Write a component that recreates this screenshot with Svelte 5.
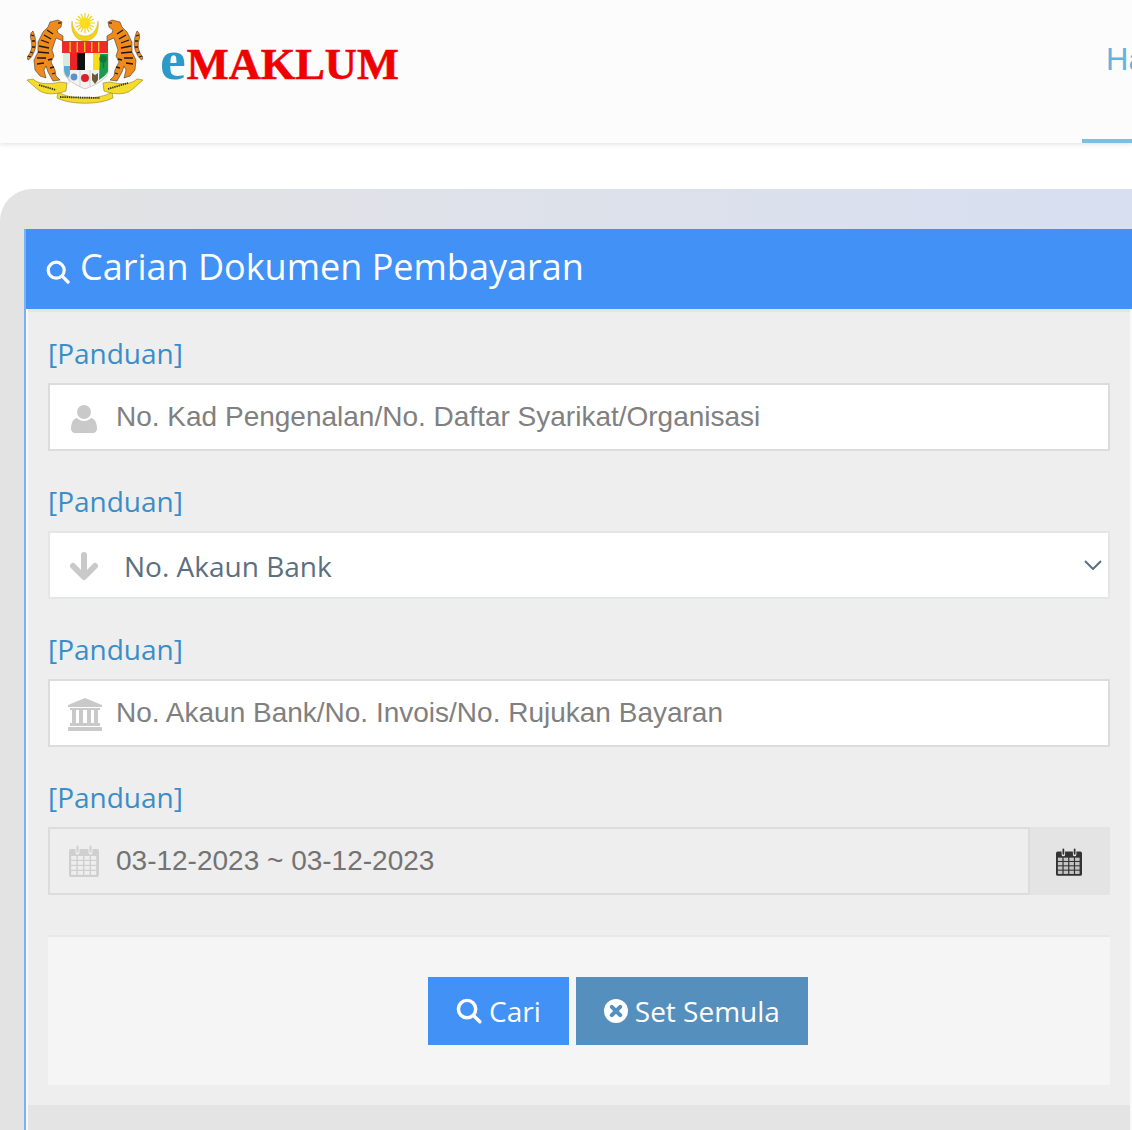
<script>
  // form rows, in page order
  const kad = 'No. Kad Pengenalan/No. Daftar Syarikat/Organisasi';
  const rujukan = 'No. Akaun Bank/No. Invois/No. Rujukan Bayaran';
  const tarikh = '03-12-2023 ~ 03-12-2023';
</script>

{#snippet searchIcon(size)}
  <svg class="icon" width={size} height={size} viewBox="0 0 24 24" fill="none" stroke="#fff" stroke-width="3.2" stroke-linecap="round">
    <circle cx="10.2" cy="10.2" r="8" />
    <path d="M16.2 16.2 22 22" />
  </svg>
{/snippet}

{#snippet calendarIcon(w, h, color, cell)}
  <svg class="icon" width={w} height={h} viewBox="0 0 30 32">
    <path fill={color} d="M2 4h4.5v3.5a2 2 0 0 0 4 0V4h9v3.5a2 2 0 0 0 4 0V4H28a2 2 0 0 1 2 2v24a2 2 0 0 1-2 2H2a2 2 0 0 1-2-2V6a2 2 0 0 1 2-2z" />
    <rect x="7.5" y="0.5" width="2" height="7" rx="1" fill={color} />
    <rect x="20.5" y="0.5" width="2" height="7" rx="1" fill={color} />
    <g fill={cell}>
      {#each [0, 1, 2, 3] as r}
        {#each [0, 1, 2, 3] as c}
          <rect x={2.2 + c * 6.6} y={11 + r * 5} width="5.2" height="3.8" />
        {/each}
      {/each}
    </g>
  </svg>
{/snippet}

<div class="page">
  <header class="topbar">
    <div class="brand">
      <svg class="crest" width="116" height="94" viewBox="27 10 116 94">
        <defs>
          <g id="tiger">
            <path d="M33 31C36 38 37 46 34 52 32 57 30 59 28 60L27 57C31 53 33 47 31 40 30 36 30 33 33 31z" fill="#ef8a1c" stroke="#222" stroke-width=".5" />
            <path d="M50 22 58 20 62 22 61 27 57 30 58 33 63 36 63 41 56 38 54 44 52 50 54 56 51 62 55 70 56 76 60 80 53 81 48 72 46 66 44 70 46 78 40 76 35 70 34 60 38 52 38 42 43 32 48 27z" fill="#ef8a1c" stroke="#222" stroke-width=".5" />
            <path d="M47 30l6 4M44 35l7 4M41 40l8 3M39 46l10 2M38 52l11 1M37 58l9 0M37 64l7-1M48 60l4-1M50 68l4-1M52 74l3-1M31 35l3 1M32 41l3 0M32 47l3 0M30 52l3 1M28 56l3 1" stroke="#1a1a1a" stroke-width="1.3" fill="none" />
            <path d="M58 23l3 0" stroke="#1a1a1a" stroke-width="1.2" />
          </g>
        </defs>
        <!-- sun and crescent -->
        <g stroke="#f6d21c" stroke-width="1.2">
          <path d="M85 13v20M75 23h20M78 16l14 14M92 16 78 30M81 14l8 18M89 14l-8 18M76 19l18 8M94 19l-18 8" />
        </g>
        <circle cx="85" cy="23" r="5.5" fill="#fbdc1e" />
        <path d="M72 21c-2 11 4 20 13 20s15-9 13-20c-1 9-6 15-13 15s-12-6-13-15z" fill="#f4d316" stroke="#b08a10" stroke-width=".3" />
        <!-- shield -->
        <path d="M64 53h44v18c0 7-10 13-23 18-12-5-21-11-21-18z" fill="#f2f2f2" stroke="#8a8a8a" stroke-width=".4" />
        <rect x="62" y="41" width="46" height="12" fill="#ee2a2a" />
        <g fill="#e9c51a">
          <rect x="69.4" y="42" width="1.4" height="10" /><rect x="76.6" y="42" width="1.4" height="10" />
          <rect x="84" y="42" width="1.4" height="10" /><rect x="91" y="42" width="1.4" height="10" /><rect x="98" y="42" width="1.4" height="10" />
        </g>
        <rect x="70" y="53" width="7" height="17" fill="#ea2323" />
        <rect x="77" y="53" width="8" height="17" fill="#111" />
        <rect x="85" y="53" width="8" height="17" fill="#fff" />
        <rect x="93" y="53" width="7" height="17" fill="#f7dc1c" />
        <path d="M100 54h8v16c0 3-4 7-9 10z" fill="#1c9b4c" />
        <path d="M103.5 55c3 0 4 3 3 5 0 2-2 3-3 3s-4-1-4-3c-1-2 1-5 4-5zM102.8 62h1.4v6h-1.4z" fill="#0e7a36" />
        <path d="M64 54h6v9l-1 10c-3-2-5-4-5-7z" fill="#d9eadf" />
        <path d="M64 66h6v8l-2 4c-3-3-4-6-4-9z" fill="#5aa8d8" />
        <circle cx="74" cy="77" r="3.4" fill="#5b93c9" />
        <circle cx="85" cy="78" r="4" fill="#d9232a" />
        <path d="M92 73l3 2 3-2v7l-3 4-3-4z" fill="#6a5a3a" />
        <path d="M69 70v14M80 70v17M90 70v17" stroke="#aaa" stroke-width=".4" fill="none" />
        <!-- tigers -->
        <use href="#tiger" />
        <use href="#tiger" transform="translate(170 0) scale(-1 1)" />
        <!-- ribbon -->
        <g fill="#f5dc2a" stroke="#7b6a10" stroke-width=".5">
          <path d="M58 92C70 100 100 100 112 92L113 98C100 105 70 105 57 98z" />
          <path d="M27 80 33 79C38 84 48 85 60 82L67 83 66 91C52 96 42 94 36 88 33 85 30 83 27 80z" />
          <path d="M143 80 137 79C132 84 122 85 110 82L103 83 104 91C118 96 128 94 134 88 137 85 140 83 143 80z" />
        </g>
        <path d="M39 85l17 5M60 97l40 1M108 89l20-6" stroke="#333" stroke-width="1.8" stroke-dasharray="1.4 .8" fill="none" />
      </svg>
      <div class="wordmark"><span class="e">e</span><span class="maklum">MAKLUM</span></div>
    </div>
    <nav class="tabs">
      <span class="tab">Halaman</span>
    </nav>
  </header>

  <main class="panel">
    <section class="card">
      <h1>
        <span class="h-ico">{@render searchIcon(24)}</span>
        Carian Dokumen Pembayaran
      </h1>
      <div class="card-body">
        <div class="group">
          <span class="panduan">[Panduan]</span>
          <div class="field">
            <svg class="icon lead user" width="26" height="28" viewBox="0 0 26 28" fill="#c9c9c9">
              <circle cx="13" cy="7" r="7" />
              <path d="M6 13c2 2 4 3 7 3s5-1 7-3c4 1 6 5 6 11 0 2-2 4-4 4H4c-2 0-4-2-4-4 0-6 2-10 6-11z" />
            </svg>
            <span class="ph">{kad}</span>
          </div>
        </div>

        <div class="group">
          <span class="panduan">[Panduan]</span>
          <div class="field select">
            <svg class="icon lead arrow" width="30" height="28" viewBox="0 0 30 28" fill="none" stroke="#c9c9c9" stroke-width="6" stroke-linecap="round" stroke-linejoin="round">
              <path d="M15 3v21M4 14l11 11 11-11" />
            </svg>
            <span class="sel-text">No. Akaun Bank</span>
            <svg class="chevron" width="18" height="10" viewBox="0 0 18 10" fill="none" stroke="#5c6f80" stroke-width="2">
              <path d="M1 1l8 8 8-8" />
            </svg>
          </div>
        </div>

        <div class="group">
          <span class="panduan">[Panduan]</span>
          <div class="field">
            <svg class="icon lead bank" width="36" height="33" viewBox="0 0 36 33" fill="#c9c9c9">
              <path d="M18 0 35 7v2H1V7z" />
              <rect x="3" y="10" width="30" height="2" />
              <rect x="5" y="12" width="4" height="13" /><rect x="12" y="12" width="4" height="13" />
              <rect x="20" y="12" width="4" height="13" /><rect x="27" y="12" width="4" height="13" />
              <rect x="3" y="25" width="30" height="3" />
              <rect x="1" y="29" width="34" height="4" rx="1" />
            </svg>
            <span class="ph">{rujukan}</span>
          </div>
        </div>

        <div class="group">
          <span class="panduan">[Panduan]</span>
          <div class="date-row">
            <div class="field readonly">
              <span class="lead cal">{@render calendarIcon(30, 32, '#cfcfcf', '#eeeeee')}</span>
              <span class="ph date">{tarikh}</span>
            </div>
            <div class="addon">{@render calendarIcon(26, 28, '#333333', '#c4c4c4')}</div>
          </div>
        </div>

        <div class="actions">
          <button class="btn cari">{@render searchIcon(26)} Cari</button>
          <button class="btn reset">
            <svg class="icon" width="24" height="24" viewBox="0 0 24 24">
              <circle cx="12" cy="12" r="12" fill="#fff" />
              <path d="M7.8 7.8l8.4 8.4M16.2 7.8l-8.4 8.4" stroke="#548fbd" stroke-width="4" stroke-linecap="round" />
            </svg>
            Set Semula
          </button>
        </div>
      </div>
      <div class="card-foot"></div>
    </section>
  </main>
</div>

<style>
  :global(body) {
    margin: 0;
    background: #fff;
  }
  .page {
    width: 1132px;
    height: 1130px;
    overflow: hidden;
    display: flex;
    flex-direction: column;
    background: #fff;
  }
  .topbar {
    height: 143px;
    flex: none;
    display: flex;
    justify-content: space-between;
    background: #fcfcfc;
    box-shadow: 0 1px 5px rgba(0, 0, 0, 0.14);
    overflow: hidden;
  }
  .brand {
    display: flex;
    align-items: flex-start;
    padding: 10px 0 0 27px;
  }
  .crest {
    filter: blur(0.35px);
    display: block;
  }
  .wordmark {
    display: flex;
    align-items: baseline;
    margin: 20px 0 0 17px;
    height: 60px;
    font-family: 'Liberation Serif', serif;
    font-weight: 700;
    line-height: 60px;
  }
  .e {
    font-size: 58px;
    color: #2b9ac9;
  }
  .maklum {
    font-size: 44.4px;
    color: #f00000;
    margin-left: 1px;
    -webkit-text-stroke: 0.6px #f00000;
  }
  .tabs {
    width: 50px;
    flex: none;
    overflow: hidden;
  }
  .tab {
    display: block;
    box-sizing: border-box;
    width: 200px;
    height: 143px;
    padding: 40px 0 0 24px;
    font-family: 'Liberation Sans', sans-serif;
    font-size: 31px;
    line-height: 40px;
    color: #62b4e0;
    border-bottom: 4px solid #7ebfe0;
  }
  .panel {
    flex: 1;
    margin-top: 46px;
    padding: 40px 0 0 24px;
    display: flex;
    border-top-left-radius: 32px;
    background: linear-gradient(90deg, #e3e3e3, #d7dff1);
  }
  .card {
    flex: 1;
    display: flex;
    flex-direction: column;
    border-left: 2px solid #7ab0f5;
    background: #f8f8f8;
  }
  h1 {
    box-sizing: border-box;
    margin: 0;
    height: 80px;
    flex: none;
    display: flex;
    align-items: center;
    gap: 10px;
    padding: 0 0 6px 20px;
    background: #4291f6;
    color: #fff;
    font-family: 'Open Sans', sans-serif;
    font-size: 36px;
    font-weight: 400;
  }
  .h-ico {
    display: flex;
    margin-top: 12px;
  }
  .icon {
    display: block;
    flex: none;
  }
  .card-body {
    margin: 0 2px;
    padding: 21px 20px 20px;
    border-top: 3px solid #e5e5e5;
    background: #eeeeee;
    display: flex;
    flex-direction: column;
    gap: 30px;
  }
  .card-foot {
    flex: 1;
    margin: 0 2px;
    background: #e4e4e4;
  }
  .group {
    display: flex;
    flex-direction: column;
    gap: 10px;
  }
  .panduan {
    font-family: 'Open Sans', sans-serif;
    font-size: 28px;
    line-height: 40px;
    color: #3a8dc9;
  }
  .field {
    box-sizing: border-box;
    height: 68px;
    display: flex;
    align-items: center;
    padding-left: 20px;
    border: 2px solid #dcdcdc;
    background: #fff;
  }
  .lead {
    margin: 0 18px 0 0;
    flex: none;
  }
  .field > .user {
    margin: 4px 19px 0 1px;
  }
  .field > .arrow {
    margin: 2px 25px 0 -1px;
  }
  .field > .bank {
    margin: 2px 13px 0 -3px;
  }
  .ph {
    font-family: 'Liberation Sans', sans-serif;
    font-size: 28px;
    color: #808080;
  }
  .date {
    color: #737373;
  }
  .select {
    border-color: #e4e7ea;
  }
  .sel-text {
    padding-top: 2px;
    font-family: 'Open Sans', sans-serif;
    font-size: 28px;
    color: #5c6f80;
  }
  .chevron {
    margin: 0 6px 0 auto;
  }
  .date-row {
    display: flex;
  }
  .readonly {
    flex: 1;
    background: #eeeeee;
  }
  .field > .cal {
    display: flex;
    margin: 0 17px 0 -1px;
  }
  .addon {
    width: 80px;
    height: 68px;
    flex: none;
    display: flex;
    align-items: center;
    justify-content: center;
    background: #e4e4e4;
    padding: 2px 2px 0 0;
    box-sizing: border-box;
  }
  .actions {
    margin-top: 10px;
    height: 150px;
    box-sizing: border-box;
    display: flex;
    align-items: center;
    justify-content: center;
    gap: 7px;
    padding-left: 78px;
    border-top: 2px solid #e8e8e8;
    background: #f5f5f5;
  }
  .btn {
    height: 68px;
    display: flex;
    align-items: center;
    gap: 7px;
    padding: 0 28px;
    border: 0;
    color: #fff;
    font-family: 'Open Sans', sans-serif;
    font-size: 28px;
  }
  .cari {
    background: #4291f6;
  }
  .reset {
    background: #548fbd;
  }
</style>
